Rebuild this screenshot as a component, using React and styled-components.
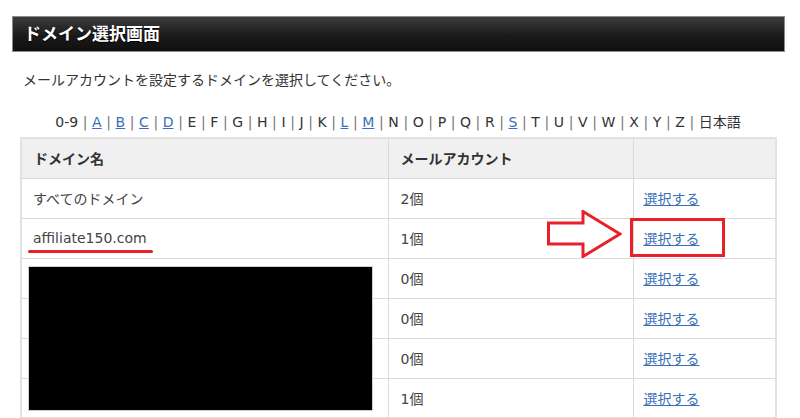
import styled, { createGlobalStyle } from 'styled-components';

const GlobalStyle = createGlobalStyle`
  html, body {
    margin: 0;
    padding: 0;
    background: #fff;
  }
  body {
    font-family: "DejaVu Sans", "Noto Sans CJK JP", sans-serif;
    color: #333;
  }
`

const Page = styled.div`
  width: 800px;
  padding: 16px 0 0 12px;
  box-sizing: border-box;
`

const TitleBar = styled.h1`
  margin: 0;
  width: 773px;
  height: 36px;
  box-sizing: border-box;
  border: 1px solid #8c8c8c;
  background: linear-gradient(#3c3c3c, #1a1a1a 55%, #101010);
  color: #fff;
  font-size: 17px;
  font-weight: bold;
  line-height: 34px;
  padding-left: 11px;
  text-shadow: 0 1px 1px #000;
`

const Lead = styled.p`
  margin: 18px 0 0 11px;
  font-size: 14px;
  line-height: 20px;
  color: #333;
`

const Index = styled.div`
  margin: 22px 0 0 8px;
  width: 756px;
  text-align: center;
  font-size: 14px;
  line-height: 20px;
  color: #333;
`

const Sep = styled.span`
  color: #777;
  margin: 0 ${p => p.$gap}px;
`

const Link = styled.a`
  color: #3a70b8;
  text-decoration: underline;
  cursor: pointer;
`

const TableWrap = styled.div`
  position: relative;
  margin: 5px 0 0 8px;
  width: 755px;
`

const Table = styled.table`
  width: 755px;
  border-collapse: collapse;
  border: 2px solid #e2e2e2;
  font-size: 14px;
  table-layout: fixed;
`

const Th = styled.th`
  height: 40px;
  padding: 0 12px;
  box-sizing: border-box;
  background: #f0f0f0;
  border: 1px solid #dadada;
  text-align: left;
  font-weight: bold;
  color: #333;
  width: ${p => p.$w}px;
`

const Td = styled.td`
  height: 40px;
  padding: 0 12px 0 ${p => p.$pl ?? 12}px;
  box-sizing: border-box;
  border: 1px solid #dadada;
  color: #444;
  vertical-align: middle;
`

const Marked = styled.span`
  position: relative;
  &::after {
    content: "";
    position: absolute;
    left: -5px;
    right: -6px;
    bottom: -7px;
    height: 3px;
    border-radius: 2px;
    background: #e8202a;
  }
`

const Redact = styled.div`
  position: absolute;
  left: 8px;
  top: 129px;
  width: 345px;
  height: 145px;
  box-sizing: border-box;
  background: #000;
  border: 1px solid #d0d0d0;
`

const Arrow = styled.svg`
  position: absolute;
  left: 527px;
  top: 73px;
`

const FocusBox = styled.div`
  position: absolute;
  left: 610px;
  top: 81px;
  width: 95px;
  height: 39px;
  box-sizing: border-box;
  border: 3px solid #e8202a;
`

const letters = ['0-9','A','B','C','D','E','F','G','H','I','J','K','L','M','N','O','P','Q','R','S','T','U','V','W','X','Y','Z','日本語'];
const linked = ['A','B','C','D','L','M','S'];

const rows = [
  { name: 'すべてのドメイン', count: '2個' },
  { name: 'affiliate150.com', count: '1個', mark: true },
  { name: '', count: '0個' },
  { name: '', count: '0個' },
  { name: '', count: '0個' },
  { name: '', count: '1個' },
];

function App() {
  return (
    <>
      <GlobalStyle />
      <Page>
        <TitleBar>ドメイン選択画面</TitleBar>
        <Lead>メールアカウントを設定するドメインを選択してください。</Lead>
        <Index>
          {letters.map((l, i) => (
            <span key={l}>
              {linked.includes(l) ? <Link>{l}</Link> : l}
              {i < letters.length - 1 && <Sep $gap={4.6}>|</Sep>}
            </span>
          ))}
        </Index>
        <TableWrap>
          <Table>
            <thead>
              <tr>
                <Th $w={367}>ドメイン名</Th>
                <Th $w={245}>メールアカウント</Th>
                <Th $w={143}></Th>
              </tr>
            </thead>
            <tbody>
              {rows.map((r, i) => (
                <tr key={i}>
                  <Td $pl={11}>{r.mark ? <Marked>{r.name}</Marked> : r.name}</Td>
                  <Td>{r.count}</Td>
                  <Td $pl={10}><Link>選択する</Link></Td>
                </tr>
              ))}
            </tbody>
          </Table>
          <Redact />
          <Arrow width="75" height="48" viewBox="0 0 75 48">
            <path d="M1.5 13 H36 V1.5 L73 24 L36 46.5 V34 H1.5 Z" fill="#fff" stroke="#e8202a" strokeWidth="3" strokeLinejoin="miter" />
          </Arrow>
          <FocusBox />
        </TableWrap>
      </Page>
    </>
  );
}

export default App;
